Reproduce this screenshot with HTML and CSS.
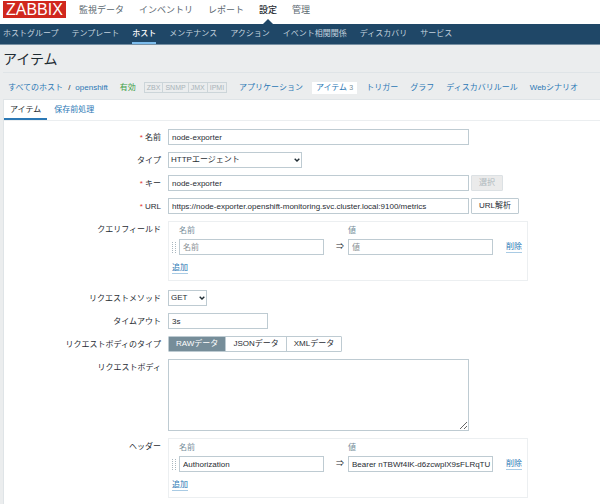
FILE: index.html
```html
<!DOCTYPE html>
<html lang="ja">
<head>
<meta charset="utf-8">
<title>アイテム</title>
<link rel="stylesheet" href="styles.css">
</head>
<body>
<header class="top">
  <a class="logo" href="#">ZABBIX</a>
  <nav class="menu">
    <a href="#">監視データ</a>
    <a href="#">インベントリ</a>
    <a href="#">レポート</a>
    <a href="#" class="current">設定</a>
    <a href="#">管理</a>
  </nav>
</header>
<nav class="submenu">
  <a href="#">ホストグループ</a>
  <a href="#">テンプレート</a>
  <a href="#" class="current">ホスト</a>
  <a href="#">メンテナンス</a>
  <a href="#">アクション</a>
  <a href="#">イベント相関関係</a>
  <a href="#">ディスカバリ</a>
  <a href="#">サービス</a>
</nav>
<main>
  <h1>アイテム</h1>
  <div class="crumbs">
    <span class="path"><a href="#">すべてのホスト</a><span>/</span><a href="#">openshift</a></span>
    <span class="enabled">有効</span>
    <span class="interfaces"><span>ZBX</span><span>SNMP</span><span>JMX</span><span>IPMI</span></span>
    <a href="#">アプリケーション</a>
    <a href="#" class="pill">アイテム <small>3</small></a>
    <a href="#">トリガー</a>
    <a href="#">グラフ</a>
    <a href="#">ディスカバリルール</a>
    <a href="#">Webシナリオ</a>
  </div>
  <form class="panel">
    <div class="tabs">
      <a href="#" class="current">アイテム</a>
      <a href="#">保存前処理</a>
    </div>
    <div class="fields">
      <label class="label required" for="name">名前</label>
      <div class="field"><input class="wide" id="name" type="text" value="node-exporter"></div>

      <label class="label" for="type">タイプ</label>
      <div class="field">
        <span class="select type">
          <select id="type"><option>HTTPエージェント</option></select>
          <svg viewBox="0 0 6 4"><path d="M.7.7 3 3 5.3.7"/></svg>
        </span>
      </div>

      <label class="label required" for="key">キー</label>
      <div class="field"><input class="wide" id="key" type="text" value="node-exporter"><button type="button" disabled>選択</button></div>

      <label class="label required" for="url">URL</label>
      <div class="field"><input class="wide" id="url" type="text" value="https://node-exporter.openshift-monitoring.svc.cluster.local:9100/metrics"><button type="button">URL解析</button></div>

      <span class="label">クエリフィールド</span>
      <div class="pairs">
        <span class="head name">名前</span>
        <span class="head value">値</span>
        <span class="grip"></span>
        <input type="text" placeholder="名前" aria-label="名前">
        <span class="arrow">⇒</span>
        <input type="text" placeholder="値" aria-label="値">
        <a class="action remove" href="#">削除</a>
        <a class="action add" href="#">追加</a>
      </div>

      <label class="label" for="method">リクエストメソッド</label>
      <div class="field">
        <span class="select method">
          <select id="method"><option>GET</option></select>
          <svg viewBox="0 0 6 4"><path d="M.7.7 3 3 5.3.7"/></svg>
        </span>
      </div>

      <label class="label" for="timeout">タイムアウト</label>
      <div class="field"><input class="short" id="timeout" type="text" value="3s"></div>

      <span class="label">リクエストボディのタイプ</span>
      <div class="field">
        <div class="segments">
          <label><input type="radio" name="body-type" checked><span>RAWデータ</span></label>
          <label><input type="radio" name="body-type"><span>JSONデータ</span></label>
          <label><input type="radio" name="body-type"><span>XMLデータ</span></label>
        </div>
      </div>

      <label class="label" for="body">リクエストボディ</label>
      <div class="field"><textarea class="wide" id="body"></textarea></div>

      <span class="label">ヘッダー</span>
      <div class="pairs">
        <span class="head name">名前</span>
        <span class="head value">値</span>
        <span class="grip"></span>
        <input type="text" value="Authorization" aria-label="名前">
        <span class="arrow">⇒</span>
        <input type="text" value="Bearer nTBWf4IK-d6zcwplX9sFLRqTU" aria-label="値">
        <a class="action remove" href="#">削除</a>
        <a class="action add" href="#">追加</a>
      </div>
    </div>
  </form>
</main>
</body>
</html>
```
FILE: styles.css
```css
* { box-sizing: border-box; }

body {
  margin: 0;
  background: #ebedee;
  color: #1f2c33;
  font: 8px/12px "Liberation Sans", "Noto Sans CJK JP", sans-serif;
}

a { color: #2b78b5; text-decoration: none; white-space: nowrap; }

input, select, textarea, button { font: inherit; color: inherit; }

/* Header */
.top {
  display: flex;
  align-items: flex-start;
  gap: 13px;
  height: 24px;
  padding: 1px 3px 0;
  background: #fff;
}

.logo {
  padding: 0 3px;
  background: #d0271d;
  color: #fff;
  font-size: 16px;
  line-height: 17px;
}

.menu { display: flex; gap: 15px; height: 23px; }
.menu a { position: relative; color: #5a676f; font-size: 9px; line-height: 18px; }
.menu .current { color: #1f2c33; font-weight: 500; }
.menu .current::after {
  content: "";
  position: absolute;
  left: 50%;
  bottom: 0;
  margin-left: -5px;
  border: 5px solid transparent;
  border-top: 0;
  border-bottom-color: #1f4767;
}

.submenu {
  display: flex;
  gap: 13px;
  height: 21px;
  padding: 0 3px;
  background: #1f4767;
  border-bottom: 1px solid #7790a3;
}
.submenu a { color: #c3d2de; line-height: 20px; }
.submenu .current { color: #fff; font-weight: 500; border-bottom: 2px solid #7cbcec; }

/* Page heading */
h1 {
  margin: 0 0 0 3px;
  height: 28px;
  border-bottom: 1px solid #dfe4e7;
  font-size: 14px;
  font-weight: 400;
  line-height: 29px;
}

.crumbs {
  display: flex;
  align-items: center;
  gap: 12px;
  height: 26px;
  padding: 3px 8px 0;
}
.path { display: flex; gap: 5px; }
.enabled { color: #429e47; margin-right: -4px; }
.interfaces {
  display: flex;
  border: 1px solid #ccd5d9;
  color: #a9b3b9;
  font-size: 7px;
  line-height: 9px;
}
.interfaces span { padding: 0 2px; }
.interfaces span + span { border-left: 1px solid #ccd5d9; }
.pill { margin: 0 -3px; padding: 0 4px; background: #fff; }
.pill small { color: #768d99; font-size: 7px; }

/* Form panel */
.panel {
  margin-left: 3px;
  background: #fff;
  border: 1px solid #dfe4e7;
  border-width: 1px 0 0 1px;
}

.tabs { display: flex; gap: 1px; height: 21px; border-bottom: 1px solid #ebeef0; }
.tabs a { padding: 0 6px; line-height: 19px; }
.tabs .current { color: #1f2c33; border-bottom: 2px solid #2b78b5; }

.fields {
  display: grid;
  grid-template-columns: 157px 1fr;
  gap: 7px;
  padding: 8px 0 5px;
}

.label { height: 16px; text-align: right; line-height: 18px; }
.required::before { content: "* "; color: #e33734; }

.field { display: flex; gap: 2px; align-items: flex-start; }

input[type="text"], textarea, select {
  height: 16px;
  margin: 0;
  padding: 0 0 0 3px;
  background: #fff;
  border: 1px solid #becbd2;
  border-radius: 0;
  outline: 0;
}
input::placeholder { color: #8a8f93; }

.wide { width: 100%; max-width: 301px; }
.short { width: 100px; }
textarea.wide { height: 72px; }

.select { position: relative; display: block; }
.select select { width: 100%; padding: 0 2px; appearance: none; }
.select svg {
  position: absolute;
  right: 2px;
  top: 6px;
  width: 6px;
  height: 4px;
  fill: none;
  stroke: #1f2c33;
  stroke-width: 1.4;
  pointer-events: none;
}
.type { width: 134px; }
.method { width: 39px; }

button {
  height: 16px;
  padding: 0 7px;
  background: #fff;
  border: 1px solid #becbd2;
  border-radius: 1px;
  line-height: 14px;
  white-space: nowrap;
}
button:disabled { background: #ebebeb; border-color: #dce1e4; color: #b0b9be; }

.segments {
  display: flex;
  border: 1px solid #becbd2;
  border-radius: 1px;
  line-height: 14px;
}
.segments label + label { border-left: 1px solid #becbd2; }
.segments input { position: absolute; opacity: 0; margin: 0; }
.segments span { display: block; padding: 0 7px; }
.segments :checked + span { background: #768d99; color: #fff; }

/* Name and value pairs */
.pairs {
  display: grid;
  grid-template-columns: 7px 145px 24px 145px 1fr;
  grid-template-rows: 16px 16px 25px;
  align-items: center;
  max-width: 360px;
  height: 60px;
  margin-bottom: 2px;
  padding: 1px 5px 0 3px;
  border: 1px solid #eceff1;
}
.pairs input { width: 100%; min-width: 0; }
.head { color: #768d99; }
.head.name { grid-column: 2; }
.head.value { grid-column: 4; }
.grip {
  grid-column: 1;
  width: 4px;
  height: 12px;
  background: repeating-linear-gradient(#fff 0 1px, transparent 1px 2px),
    repeating-linear-gradient(90deg, #a9b7bf 0 1px, #fff 1px 3px);
}
.arrow { padding-right: 4px; text-align: right; }
.action { justify-self: start; line-height: 11px; border-bottom: 1px solid #a9cbe4; }
.remove { justify-self: end; }
.add { grid-column: 1 / 3; }
```
